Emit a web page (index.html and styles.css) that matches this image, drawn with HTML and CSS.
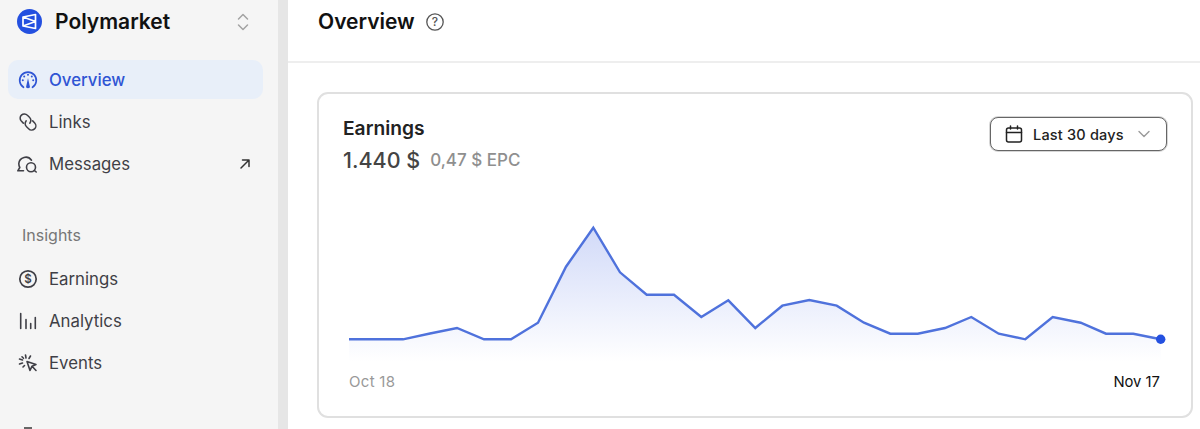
FILE: index.html
```html
<!DOCTYPE html>
<html lang="en">
<head>
<meta charset="utf-8">
<title>Overview</title>
<link rel="stylesheet" href="styles.css">
</head>
<body>
<div class="app">
  <aside class="sidebar">
    <div class="brand">
      <svg class="brand-logo" viewBox="0 0 25 25"><circle cx="12.500" cy="12.500" r="12.500" fill="#2450e0"/><path d="M6 8 18.500 5.500V19.500L6 17ZM6 8 18.500 12.500 6 17" fill="none" stroke="#fff" stroke-width="1.700" stroke-linejoin="round"/></svg>
      <span class="brand-name">Polymarket</span>
      <svg class="brand-switch" viewBox="0 0 14 20"><path d="M2.500 7 7 2.500 11.500 7M2.500 13 7 17.500 11.500 13" fill="none" stroke="#a3a3a3" stroke-width="1.500" stroke-linecap="round" stroke-linejoin="round"/></svg>
    </div>
    <nav class="nav nav-main">
      <a class="nav-item active">
        <svg class="nav-icon" viewBox="0 0 20 20"><path d="M5.500 17.300A8.300 8.300 0 1 1 14.500 17.300" fill="none" stroke="currentColor" stroke-width="1.700" stroke-linecap="round"/><path d="M10 8 12 17.200Q10 19.200 8 17.200Z" fill="currentColor"/><circle cx="10" cy="4.800" r="1" fill="currentColor"/><circle cx="6.200" cy="6.500" r="1" fill="currentColor"/><circle cx="13.800" cy="6.500" r="1" fill="currentColor"/><circle cx="4.800" cy="10.300" r="1" fill="currentColor"/><circle cx="15.200" cy="10.300" r="1" fill="currentColor"/></svg>
        <span>Overview</span>
      </a>
      <a class="nav-item">
        <svg class="nav-icon" viewBox="0 0 20 20"><g fill="none" stroke="currentColor" stroke-width="1.500" stroke-linecap="round"><path d="M11.800 11.200A4.700 4.700 0 0 0 11.200 5L9.400 3.300A4.200 4.200 0 0 0 3.300 9.100L5.300 11.100"/><path d="M8.200 8.800A4.700 4.700 0 0 0 8.800 15L10.600 16.700A4.200 4.200 0 0 0 16.700 10.900L14.700 8.900"/></g></svg>
        <span>Links</span>
      </a>
      <a class="nav-item">
        <svg class="nav-icon msg-icon" viewBox="0 0 20 20"><g fill="none" stroke="currentColor" stroke-width="1.600" stroke-linecap="round" stroke-linejoin="round"><path d="M14.500 6.200A7 7 0 0 0 1.800 9.500Q1.800 11.700 2.800 13.500L.8 16.800H6.500"/><circle cx="14" cy="13.200" r="4.500"/><path d="M17.200 16.400 19.200 18"/></g></svg>
        <span>Messages</span>
        <svg class="nav-arrow" viewBox="0 0 12 12"><path d="M2 10 10 2M3.500 2H10V8.500" fill="none" stroke="currentColor" stroke-width="1.500" stroke-linecap="round" stroke-linejoin="round"/></svg>
      </a>
    </nav>
    <div class="section-label">Insights</div>
    <nav class="nav">
      <a class="nav-item">
        <svg class="nav-icon" viewBox="0 0 20 20"><circle cx="10" cy="10" r="8.200" fill="none" stroke="currentColor" stroke-width="1.700"/><text class="dollar" x="10" y="14.200" text-anchor="middle">$</text></svg>
        <span>Earnings</span>
      </a>
      <a class="nav-item">
        <svg class="nav-icon" viewBox="0 0 20 20"><path d="M2.700 2.500V17.500M8 8.500V17.500M12.700 12.500V17.500M17.300 6.500V17.500" fill="none" stroke="currentColor" stroke-width="1.600" stroke-linecap="round"/></svg>
        <span>Analytics</span>
      </a>
      <a class="nav-item">
        <svg class="nav-icon" viewBox="0 0 20 20"><g fill="none" stroke="currentColor" stroke-width="1.600" stroke-linecap="round" stroke-linejoin="round"><path d="M9 8.500 18 11.500 14 13.200 12 17.500ZM14.300 13.500 18 17.500"/><path d="M7.500 2 8 5M12.500 3 11 5.500M1.500 6 4.500 7M1.500 11 4.500 10M4 3.800 5.500 5.300M5 14 6.500 12.500"/></g></svg>
        <span>Events</span>
      </a>
    </nav>
    <div class="clipped-icon"></div>
  </aside>
  <div class="gutter"></div>
  <main class="main">
    <header class="page-head">
      <h1>Overview</h1>
      <svg class="help" viewBox="0 0 18 18"><circle cx="9" cy="9" r="8.200" fill="none" stroke="#555" stroke-width="1.300"/><text class="help-mark" x="9" y="13" text-anchor="middle">?</text></svg>
    </header>
    <div class="content">
      <section class="card">
        <div class="card-head">
          <div>
            <h2>Earnings</h2>
            <div class="stats"><span class="amount">1.440 $</span><span class="epc">0,47 $ EPC</span></div>
          </div>
          <button class="range">
            <svg class="cal" viewBox="0 0 18 18"><g fill="none" stroke="#222" stroke-width="1.500" stroke-linecap="round"><rect x="1.500" y="3" width="15" height="14" rx="2"/><path d="M1.500 7.500H16.500M5.500 1V4M12.500 1V4"/></g></svg>
            <span>Last 30 days</span>
            <svg class="chev" viewBox="0 0 12 8"><path d="M1 1.500 6 6.500 11 1.500" fill="none" stroke="#9a9a9a" stroke-width="1.400" stroke-linecap="round" stroke-linejoin="round"/></svg>
          </button>
        </div>
        <svg class="chart" viewBox="343 200 830 172">
          <defs>
            <linearGradient id="fill" x1="0" y1="227" x2="0" y2="362" gradientUnits="userSpaceOnUse">
              <stop offset="0" stop-color="#2f55e0" stop-opacity=".22"/>
              <stop offset="1" stop-color="#2f55e0" stop-opacity="0"/>
            </linearGradient>
          </defs>
          <path d="M349 339.300H403L430 333.500 457 328 484 339.300H511L538 322.700 566 266.700 593.300 227.700 620 272.300 646.700 294.700H674L701.300 317 728.300 300.300 755.300 328 782.300 305.700 809.300 300 836.700 305.700 864 322.700 890.300 333.700H917.700L945 328 971.300 317 998.700 333.700 1025.300 339.300 1052.700 317 1080.700 322.700 1106 333.700H1133.300L1160.700 339.300V364H349Z" fill="url(#fill)"/>
          <path d="M349 339.300H403L430 333.500 457 328 484 339.300H511L538 322.700 566 266.700 593.300 227.700 620 272.300 646.700 294.700H674L701.300 317 728.300 300.300 755.300 328 782.300 305.700 809.300 300 836.700 305.700 864 322.700 890.300 333.700H917.700L945 328 971.300 317 998.700 333.700 1025.300 339.300 1052.700 317 1080.700 322.700 1106 333.700H1133.300L1160.700 339.300" fill="none" stroke="#4f72dc" stroke-width="2.400"/>
          <circle cx="1160.700" cy="339.300" r="4.700" fill="#2450e0"/>
        </svg>
        <div class="axis"><span class="axis-start">Oct 18</span><span class="axis-end">Nov 17</span></div>
      </section>
    </div>
  </main>
</div>
</body>
</html>
```

FILE: styles.css
```css
* { box-sizing: border-box; }
html, body { margin: 0; height: 429px; overflow: hidden; background: #fff; }
body { font-family: Inter, "Liberation Sans", sans-serif; color: #111; }
.app { display: flex; height: 429px; overflow: hidden; }

.sidebar { width: 278px; flex: none; background: #f5f5f5; padding: 9px 15px 0 8px; overflow: hidden; }
.gutter { width: 10px; flex: none; background: #e6e6e6; }

.brand { display: flex; align-items: center; height: 25px; padding-left: 9px; }
.brand-logo { width: 25px; height: 25px; flex: none; }
.brand-name { margin-left: 13px; font-size: 21px; font-weight: 600; color: #111; }
.brand-switch { width: 14px; height: 20px; margin-left: auto; margin-right: 13px; }

.nav { display: flex; flex-direction: column; gap: 3px; }
.nav-main { margin-top: 26px; }
.nav-item { display: flex; align-items: center; height: 39px; padding: 0 12px 0 10px; border-radius: 10px; font-size: 16.800px; color: #3f3f46; }
.nav-item.active { background: #e8eff9; color: #2f55d4; font-weight: 500; }
.nav-icon { width: 20px; height: 20px; flex: none; margin-right: 11px; overflow: visible; }
.msg-icon { transform: translateX(-1px); }
.nav-arrow { width: 12px; height: 12px; margin-left: auto; color: #333; }
.dollar { font: 600 11.500px Inter, sans-serif; fill: currentColor; }

.section-label { margin: 42px 0 14px 14px; font-size: 16px; line-height: 20px; color: #777; }
.clipped-icon { width: 8px; height: 2px; margin: 45px 0 0 16px; background: #666; }

.main { flex: 1; min-width: 0; }
.page-head { display: flex; align-items: flex-start; height: 63px; padding: 8px 0 0 30px; border-bottom: 2px solid #eeeeee; }
h1 { margin: 0; font-size: 21px; line-height: 28px; font-weight: 600; color: #111; }
.help { width: 18px; height: 18px; margin: 5px 0 0 11px; }
.help-mark { font: 500 12px Inter, sans-serif; fill: #555; }

.content { padding: 29px 7px 0 29px; }
.card { height: 326px; padding: 22px 24px 0 24px; border: 2px solid #e0e0e0; border-radius: 11px; }
.card-head { display: flex; justify-content: space-between; align-items: flex-start; height: 71px; }
h2 { margin: 0; font-size: 19.200px; line-height: 24px; font-weight: 600; color: #222; }
.stats { display: flex; align-items: center; gap: 10px; margin-top: 6px; }
.amount { font-size: 21.500px; line-height: 28px; font-weight: 500; color: #444; }
.epc { font-size: 17px; font-weight: 500; color: #8f8f8f; }

.range { display: flex; align-items: center; width: 177px; height: 34px; margin-top: 1px; padding: 0 0 0 14px; background: #fff; border: 1px solid #666; box-shadow: 0 0 0 1px rgba(120, 120, 120, .3); border-radius: 8px; font: 500 14.500px Inter, sans-serif; letter-spacing: .2px; color: #222; }
.cal { width: 18px; height: 18px; margin-right: 10px; flex: none; }
.chev { width: 12px; height: 8px; margin-left: 14px; }

.chart { display: block; width: 830px; height: 172px; margin-top: 13px; }
.axis { display: flex; justify-content: space-between; width: 811px; margin: 0 0 0 6px; font-size: 15px; line-height: 20px; }
.axis-start { color: #999; letter-spacing: .3px; }
.axis-end { color: #111; font-size: 14.800px; }
```
